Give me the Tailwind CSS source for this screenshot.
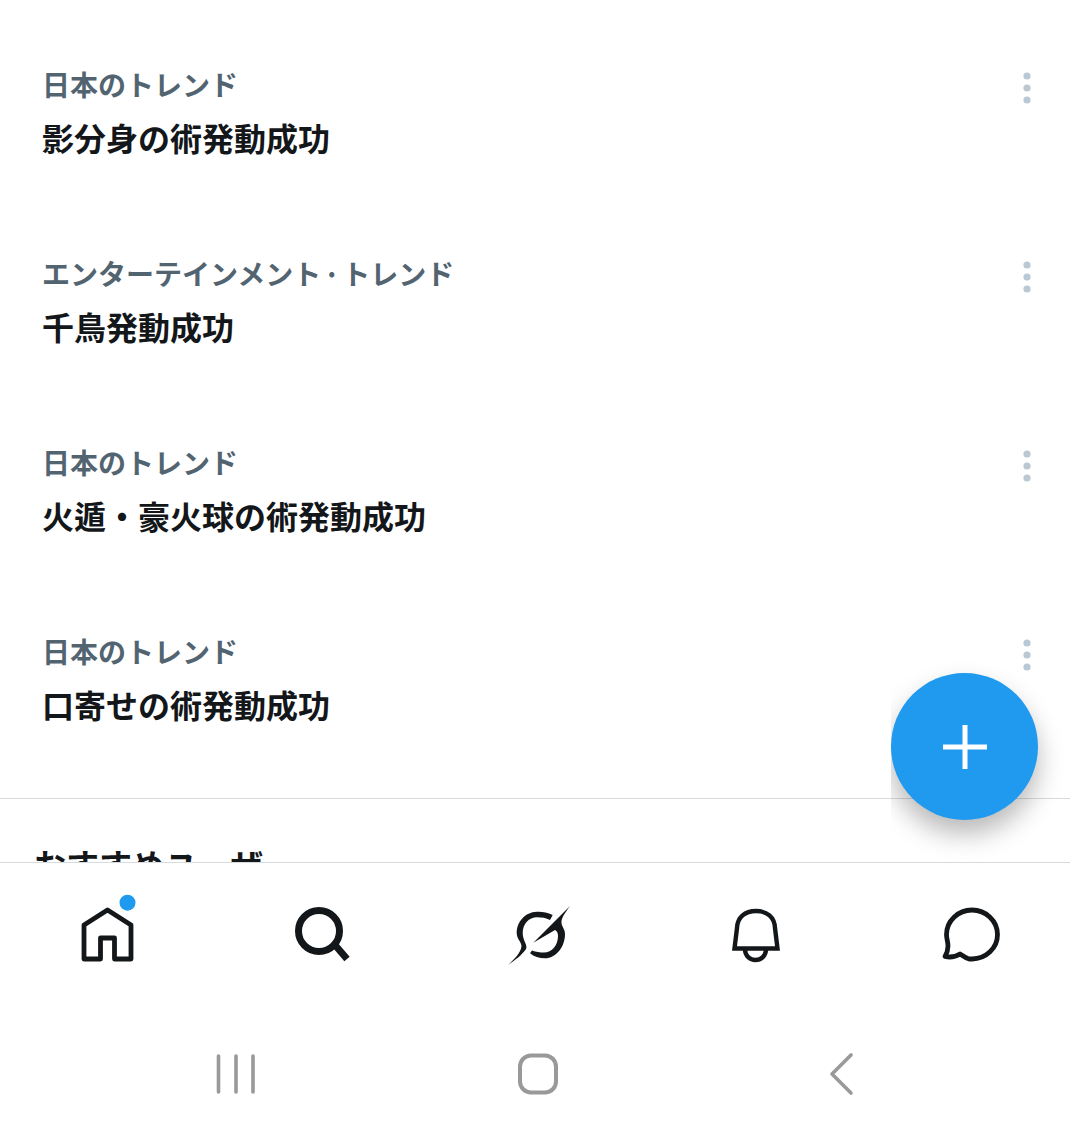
<!DOCTYPE html>
<html lang="ja">
<head>
    <meta charset="UTF-8">
    <meta name="viewport" content="width=device-width, initial-scale=1.0">
    <title>トレンド</title>
    <script src="https://cdn.jsdelivr.net/npm/@tailwindcss/browser@4"></script>
</head>
<body class="relative bg-white h-[1135px] overflow-hidden font-['Noto_Sans_CJK_JP','Noto_Sans',sans-serif]">

    <!-- TRENDS -->
    <main class="h-[862px] overflow-hidden pt-[65px]">
        <div class="flex flex-col gap-[94px]">
            <div class="flex justify-between h-[95px] pl-[42px] pr-[39px]">
                <div>
                    <p class="text-[28px] leading-[38px] font-semibold text-[#536471]">日本のトレンド</p>
                    <p class="mt-[12px] text-[32px] leading-[44px] font-bold text-[#14171a]">影分身の術発動成功</p>
                </div>
                <svg class="w-2 h-8 mt-[7px] text-[#b9c8d3]" viewBox="0 0 8 32" fill="currentColor"><circle cx="4" cy="4" r="3.6"/><circle cx="4" cy="16" r="3.6"/><circle cx="4" cy="28" r="3.6"/></svg>
            </div>
            <div class="flex justify-between h-[95px] pl-[42px] pr-[39px]">
                <div>
                    <p class="text-[28px] leading-[38px] font-semibold text-[#536471]">エンターテインメント<span class="inline-block w-[21px] text-center">·</span>トレンド</p>
                    <p class="mt-[12px] text-[32px] leading-[44px] font-bold text-[#14171a]">千鳥発動成功</p>
                </div>
                <svg class="w-2 h-8 mt-[7px] text-[#b9c8d3]" viewBox="0 0 8 32" fill="currentColor"><circle cx="4" cy="4" r="3.6"/><circle cx="4" cy="16" r="3.6"/><circle cx="4" cy="28" r="3.6"/></svg>
            </div>
            <div class="flex justify-between h-[95px] pl-[42px] pr-[39px]">
                <div>
                    <p class="text-[28px] leading-[38px] font-semibold text-[#536471]">日本のトレンド</p>
                    <p class="mt-[12px] text-[32px] leading-[44px] font-bold text-[#14171a]">火遁・豪火球の術発動成功</p>
                </div>
                <svg class="w-2 h-8 mt-[7px] text-[#b9c8d3]" viewBox="0 0 8 32" fill="currentColor"><circle cx="4" cy="4" r="3.6"/><circle cx="4" cy="16" r="3.6"/><circle cx="4" cy="28" r="3.6"/></svg>
            </div>
            <div class="flex justify-between h-[95px] pl-[42px] pr-[39px]">
                <div>
                    <p class="text-[28px] leading-[38px] font-semibold text-[#536471]">日本のトレンド</p>
                    <p class="mt-[12px] text-[32px] leading-[44px] font-bold text-[#14171a]">口寄せの術発動成功</p>
                </div>
                <svg class="w-2 h-8 mt-[7px] text-[#b9c8d3]" viewBox="0 0 8 32" fill="currentColor"><circle cx="4" cy="4" r="3.6"/><circle cx="4" cy="16" r="3.6"/><circle cx="4" cy="28" r="3.6"/></svg>
            </div>
        </div>

        <div class="mt-[71px] border-t border-[#d5dbdf] pt-[42px] pl-[33px]">
            <h2 class="text-[33px] leading-[46px] font-bold text-[#14171a]">おすすめユーザー</h2>
        </div>
    </main>

    <!-- FAB: the wrapper cuts the shadow on the left as in the picture -->
    <div class="absolute left-[891px] top-[660px] w-[179px] h-[202px] overflow-hidden">
        <button class="flex items-center justify-center mt-[13px] w-[147px] h-[147px] rounded-full bg-[#1f9aef] shadow-[0_14px_26px_rgba(0,0,0,0.28)]">
            <svg class="w-11 h-11" viewBox="0 0 44 44" fill="#fff"><rect x="0" y="19.5" width="44" height="5"/><rect x="19.5" y="0" width="5" height="44"/></svg>
        </button>
    </div>

    <!-- TAB BAR -->
    <nav class="flex gap-[152px] border-t border-[#d5dbdf] pt-10 pl-[75px] text-[#14171a]">
        <svg class="w-16 h-16 shrink-0 overflow-visible" viewBox="0 0 64 64" fill="none" stroke="currentColor" stroke-width="4.8" stroke-linejoin="round">
            <path d="M9 56V22L32.5 7L56 22V56H39.5V35H25.5V56Z"/>
            <circle cx="52.5" cy="-0.3" r="8" fill="#1f9aef" stroke="none"/>
        </svg>
        <svg class="w-16 h-16 shrink-0" viewBox="0 0 64 64" fill="none" stroke="currentColor" stroke-width="7">
            <circle cx="28" cy="28" r="20.5"/>
            <path d="M44 42L56 56"/>
        </svg>
        <svg class="w-16 h-16 shrink-0" viewBox="0 0 64 64" fill="currentColor">
            <path d="M45.7 12C40 9 35 8.5 29.7 8.7C18 9 9.7 19 9.7 30C9.7 36 14 38 14.5 43C14 50 7 56 1.3 62C8 57 15 52 19 46C21 42 15.7 38 15.7 30C15.7 21 22 14.3 30 14.3C35 14.3 39 15 43 17Z"/>
            <path d="M63 3C58 10 54 15 54.5 20C55 24 58 26 58 31C58 44 49 55.3 38 55.3C32 55.3 27 53.5 23 50.3L25 47.5C29 49 33 49.5 37 49.5C45 49.5 51 42 51 33C51 30 50 28 48 27L26.3 39.7Z"/>
        </svg>
        <svg class="w-16 h-16 shrink-0" viewBox="0 0 64 64" fill="none" stroke="currentColor" stroke-width="4.4">
            <path d="M11.5 45.5L14 25C14.5 14 22 8 33 8C44 8 51.5 14 52 25L54.5 45.5Z"/>
            <path d="M22 46C22 53 27 57 32.5 57C38 57 43 53 43 46"/>
        </svg>
        <svg class="w-16 h-16 shrink-0" viewBox="0 0 64 64" fill="none" stroke="currentColor" stroke-width="4.8" stroke-linejoin="round">
            <path d="M29.5 55.8C31 56 32 56 33 56C47 56 58.5 45 58.5 31.5C58.5 18 47 7 33 7C19 7 7.5 18 7.5 31.5C7.5 36 9 39 9 43C9 47 8 50 6 53.5C11 54.5 17 53.5 21 51C24 53 26.5 55 29.5 55.8Z"/>
        </svg>
    </nav>

    <!-- ANDROID NAV -->
    <div class="flex items-center mt-[85px] pl-[216px] text-[#999999]">
        <svg class="w-10 h-[42px]" viewBox="0 0 40 42" fill="none" stroke="currentColor" stroke-width="3.6" stroke-linecap="round">
            <path d="M2.5 3V39M20 3V39M37 3V39"/>
        </svg>
        <svg class="ml-[261px] w-[42px] h-[42px]" viewBox="0 0 42 42" fill="none" stroke="currentColor" stroke-width="4">
            <rect x="3" y="2.5" width="36" height="37" rx="11"/>
        </svg>
        <svg class="ml-[268px] w-7 h-[44px]" viewBox="0 0 28 44" fill="none" stroke="currentColor" stroke-width="3.6" stroke-linecap="round" stroke-linejoin="round">
            <path d="M24 3L5 22L24 41"/>
        </svg>
    </div>
</body>
</html>
